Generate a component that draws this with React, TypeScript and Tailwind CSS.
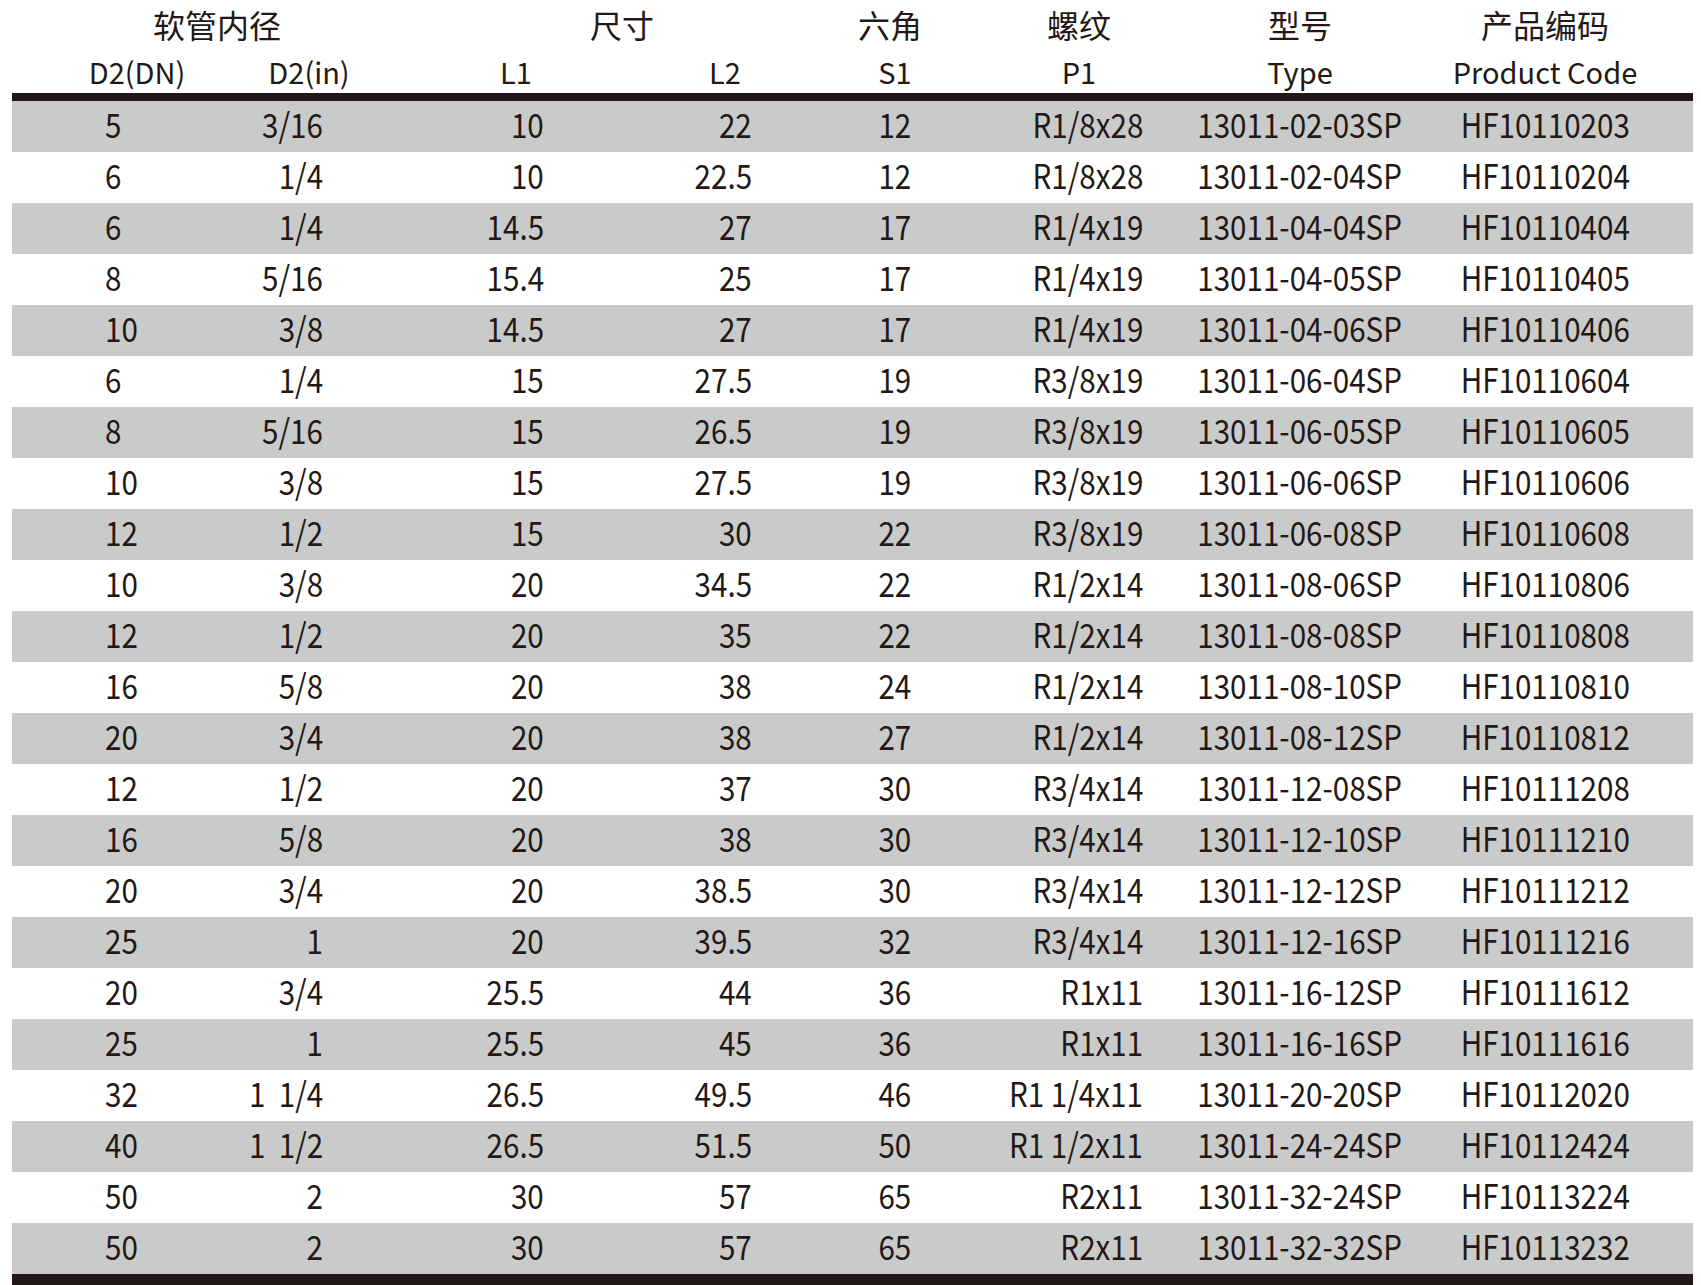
import React from 'react';

type Row = [string, string, string, string, string, string, string, string];

const rows: Row[] = [
  ['5', '3/16', '10', '22', '12', 'R1/8x28', '13011-02-03SP', 'HF10110203'],
  ['6', '1/4', '10', '22.5', '12', 'R1/8x28', '13011-02-04SP', 'HF10110204'],
  ['6', '1/4', '14.5', '27', '17', 'R1/4x19', '13011-04-04SP', 'HF10110404'],
  ['8', '5/16', '15.4', '25', '17', 'R1/4x19', '13011-04-05SP', 'HF10110405'],
  ['10', '3/8', '14.5', '27', '17', 'R1/4x19', '13011-04-06SP', 'HF10110406'],
  ['6', '1/4', '15', '27.5', '19', 'R3/8x19', '13011-06-04SP', 'HF10110604'],
  ['8', '5/16', '15', '26.5', '19', 'R3/8x19', '13011-06-05SP', 'HF10110605'],
  ['10', '3/8', '15', '27.5', '19', 'R3/8x19', '13011-06-06SP', 'HF10110606'],
  ['12', '1/2', '15', '30', '22', 'R3/8x19', '13011-06-08SP', 'HF10110608'],
  ['10', '3/8', '20', '34.5', '22', 'R1/2x14', '13011-08-06SP', 'HF10110806'],
  ['12', '1/2', '20', '35', '22', 'R1/2x14', '13011-08-08SP', 'HF10110808'],
  ['16', '5/8', '20', '38', '24', 'R1/2x14', '13011-08-10SP', 'HF10110810'],
  ['20', '3/4', '20', '38', '27', 'R1/2x14', '13011-08-12SP', 'HF10110812'],
  ['12', '1/2', '20', '37', '30', 'R3/4x14', '13011-12-08SP', 'HF10111208'],
  ['16', '5/8', '20', '38', '30', 'R3/4x14', '13011-12-10SP', 'HF10111210'],
  ['20', '3/4', '20', '38.5', '30', 'R3/4x14', '13011-12-12SP', 'HF10111212'],
  ['25', '1', '20', '39.5', '32', 'R3/4x14', '13011-12-16SP', 'HF10111216'],
  ['20', '3/4', '25.5', '44', '36', 'R1x11', '13011-16-12SP', 'HF10111612'],
  ['25', '1', '25.5', '45', '36', 'R1x11', '13011-16-16SP', 'HF10111616'],
  ['32', '1  1/4', '26.5', '49.5', '46', 'R1 1/4x11', '13011-20-20SP', 'HF10112020'],
  ['40', '1  1/2', '26.5', '51.5', '50', 'R1 1/2x11', '13011-24-24SP', 'HF10112424'],
  ['50', '2', '30', '57', '65', 'R2x11', '13011-32-24SP', 'HF10113224'],
  ['50', '2', '30', '57', '65', 'R2x11', '13011-32-32SP', 'HF10113232'],
];

const grid =
  'grid grid-cols-[250px_94px_284px_140px_230px_150px_280px_210px_1fr]';

// the printed table uses horizontally condensed glyphs
function Cell({ text, align, className = '' }: { text: string; align: 'left' | 'right' | 'center'; className?: string }) {
  const justify = align === 'left' ? 'justify-start' : align === 'right' ? 'justify-end' : 'justify-center';
  const origin = align === 'left' ? 'origin-left' : align === 'right' ? 'origin-right' : 'origin-center';
  return (
    <div className={`flex ${justify} ${className}`}>
      <span className={`inline-block shrink-0 whitespace-pre scale-x-[0.87] ${origin}`}>{text}</span>
    </div>
  );
}

export default function App() {
  return (
    <div
      className="w-[1701px] h-[1285px] bg-white text-[#231815] overflow-hidden"
      style={{ fontFamily: '"Noto Sans CJK SC", "Noto Sans", sans-serif' }}
    >
      <div className="ml-[12px] w-[1681px]">
        {/* group titles */}
        <div className={`${grid} h-[48px] items-center text-[32px] leading-none`}>
          <div className="col-span-2 text-center pl-[66px]">软管内径</div>
          <div className="col-span-2 text-center pl-[108px]">尺寸</div>
          <div className="text-center pr-[10px]">六角</div>
          <div className="text-center pr-[12px]">螺纹</div>
          <div className="text-center">型号</div>
          <div className="text-center">产品编码</div>
        </div>

        {/* sub titles */}
        <div className={`${grid} h-[45px] pt-[2px] items-center text-[29px] leading-none`}>
          <div className="text-center">D2(DN)</div>
          <div className="text-center whitespace-nowrap">D2(in)</div>
          <div className="text-center pl-[36px]">L1</div>
          <div className="text-center pl-[30px]">L2</div>
          <div className="text-center">S1</div>
          <div className="text-center pr-[12px]">P1</div>
          <div className="text-center">Type</div>
          <div className="text-center whitespace-nowrap">Product Code</div>
        </div>

        <div className="h-[8px] bg-[#231815]" />

        {rows.map((r, i) => (
          <div
            key={i}
            className={`${grid} h-[51px] pb-[6px] items-center text-[34px] leading-none ${
              i % 2 === 0 ? 'bg-[#c9caca]' : 'bg-white'
            }`}
          >
            <Cell text={r[0]} align="left" className="pl-[93px]" />
            <Cell text={r[1]} align="right" className="pr-[33px]" />
            <Cell text={r[2]} align="right" className="pr-[96px]" />
            <Cell text={r[3]} align="right" className="pr-[28px]" />
            <Cell text={r[4]} align="center" />
            <Cell text={r[5]} align="right" className="pr-[17px]" />
            <Cell text={r[6]} align="center" />
            <Cell text={r[7]} align="center" />
            <div />
          </div>
        ))}

        <div className="h-[12px] bg-[#231815]" />
      </div>
    </div>
  );
}
